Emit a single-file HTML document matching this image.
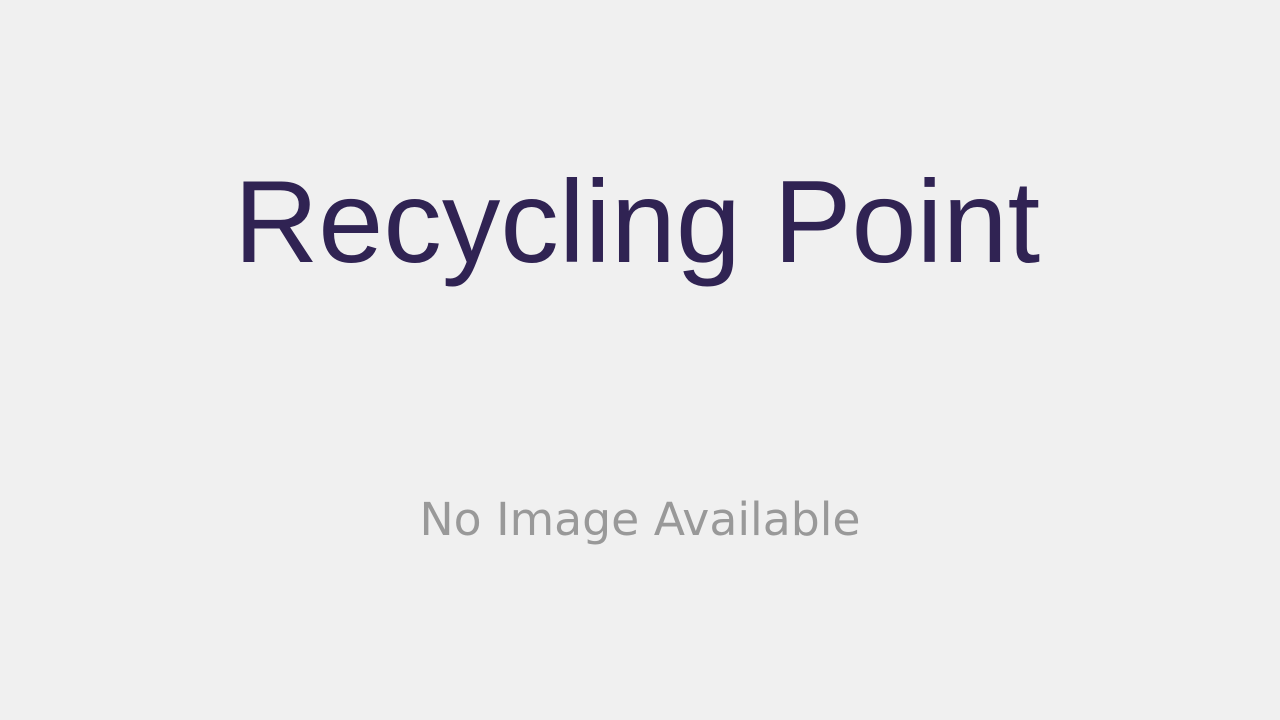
<!DOCTYPE html>
<html><head><meta charset="utf-8"><style>
html,body{margin:0;padding:0;width:1280px;height:720px;background:#f0f0f0;overflow:hidden;position:relative}
.t{position:absolute;left:0;width:1280px;text-align:center;white-space:nowrap}
#a{font-family:"Liberation Sans",Arial,sans-serif;font-size:117px;color:#302353;top:152px;line-height:140px;left:-3px}
#b{font-family:"DejaVu Sans",Verdana,sans-serif;font-size:45.7px;color:#999;top:490px;line-height:60px}
</style></head><body>
<div class="t" id="a">Recycling Point</div>
<div class="t" id="b">No Image Available</div>
</body></html>
